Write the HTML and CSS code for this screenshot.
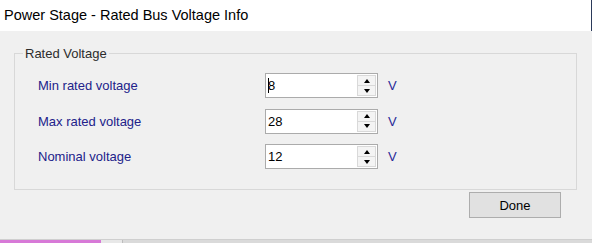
FILE: index.html
```html
<!DOCTYPE html>
<html lang="en">
<head>
    <meta charset="UTF-8">
    <title>Power Stage - Rated Bus Voltage Info</title>
    <link rel="stylesheet" href="styles.css">
</head>
<body>
    <div class="titlebar">Power Stage - Rated Bus Voltage Info</div>
    <div class="dialog">
        <fieldset class="group">
            <legend>Rated Voltage</legend>
            <div class="rows">
                <label class="label">Min rated voltage</label>
                <div class="spin">
                    <span class="value"><span class="caret"></span>8</span>
                    <div class="spin-buttons"><span class="up"></span><span class="down"></span></div>
                </div>
                <span class="unit">V</span>

                <label class="label">Max rated voltage</label>
                <div class="spin">
                    <span class="value">28</span>
                    <div class="spin-buttons"><span class="up"></span><span class="down"></span></div>
                </div>
                <span class="unit">V</span>

                <label class="label">Nominal voltage</label>
                <div class="spin">
                    <span class="value">12</span>
                    <div class="spin-buttons"><span class="up"></span><span class="down"></span></div>
                </div>
                <span class="unit">V</span>
            </div>
        </fieldset>
        <div class="actions">
            <button class="done">Done</button>
        </div>
    </div>
    <div class="taskbar">
        <span class="task-pink"></span>
        <span class="task-gap"></span>
    </div>
</body>
</html>
```

FILE: styles.css
```css
body {
    margin: 0;
    width: 592px;
    height: 243px;
    overflow: hidden;
    background-color: #f0f0f0;
    font-family: "Liberation Sans", Arial, sans-serif;
    font-size: 13px;
}
.titlebar {
    height: 31px;
    line-height: 31px;
    padding-left: 4px;
    box-sizing: border-box;
    background-color: #fff;
    border-right: 1px solid #2b3a5a;
    font-size: 14.5px;
    color: #000;
}
.dialog {
    height: 208px;
    padding-top: 15px;
    box-sizing: border-box;
    background-color: #f0f0f0;
}
.group {
    margin: 0 15px 0 14px;
    padding: 0;
    min-width: 0;
    border: 1px solid #d8d8d8;
}
.group legend {
    margin-left: 8px;
    padding: 0 2px;
    line-height: 15px;
    color: #2c2c2c;
}
.rows {
    display: grid;
    grid-template-columns: 217px 113px auto;
    grid-auto-rows: 25px;
    column-gap: 10px;
    row-gap: 10.5px;
    align-items: center;
    padding: 12px 0 20px 23px;
}
.label {
    color: #22228a;
}
.unit {
    color: #2a2a98;
}
.spin {
    display: flex;
    height: 25px;
    box-sizing: border-box;
    border: 1px solid #ababab;
    background-color: #fff;
}
.value {
    flex: 1;
    padding-left: 2px;
    line-height: 23px;
    color: #000;
}
.caret {
    display: inline-block;
    width: 1px;
    height: 15px;
    margin-right: -1px;
    vertical-align: -3px;
    background-color: #000;
}
.spin-buttons {
    display: flex;
    flex-direction: column;
    width: 17px;
    margin: 1px;
    border: 1px solid #d9d9d9;
    background-color: #f4f4f4;
}
.spin-buttons span {
    flex: 1;
    display: flex;
    align-items: center;
    justify-content: center;
}
.spin-buttons .up {
    border-bottom: 1px solid #d9d9d9;
}
.up::after {
    content: "";
    border-left: 3.5px solid transparent;
    border-right: 3.5px solid transparent;
    border-bottom: 4px solid #000;
}
.down::after {
    content: "";
    border-left: 3.5px solid transparent;
    border-right: 3.5px solid transparent;
    border-top: 4px solid #000;
}
.actions {
    display: flex;
    justify-content: flex-end;
    padding: 2px 31px 0 0;
}
.done {
    width: 92px;
    height: 26px;
    padding: 0;
    border: 1px solid #adadad;
    background-color: #e1e1e1;
    font-family: inherit;
    font-size: 13px;
    color: #000;
}
.taskbar {
    display: flex;
    height: 4px;
    box-sizing: border-box;
    border-top: 1px solid #cfcfcf;
    background-color: #dadada;
}
.task-pink {
    width: 101px;
    background-color: #d779d7;
}
.task-gap {
    width: 21px;
    background-color: #e8e8e8;
    border-right: 1px solid #bdbdbd;
}
```
